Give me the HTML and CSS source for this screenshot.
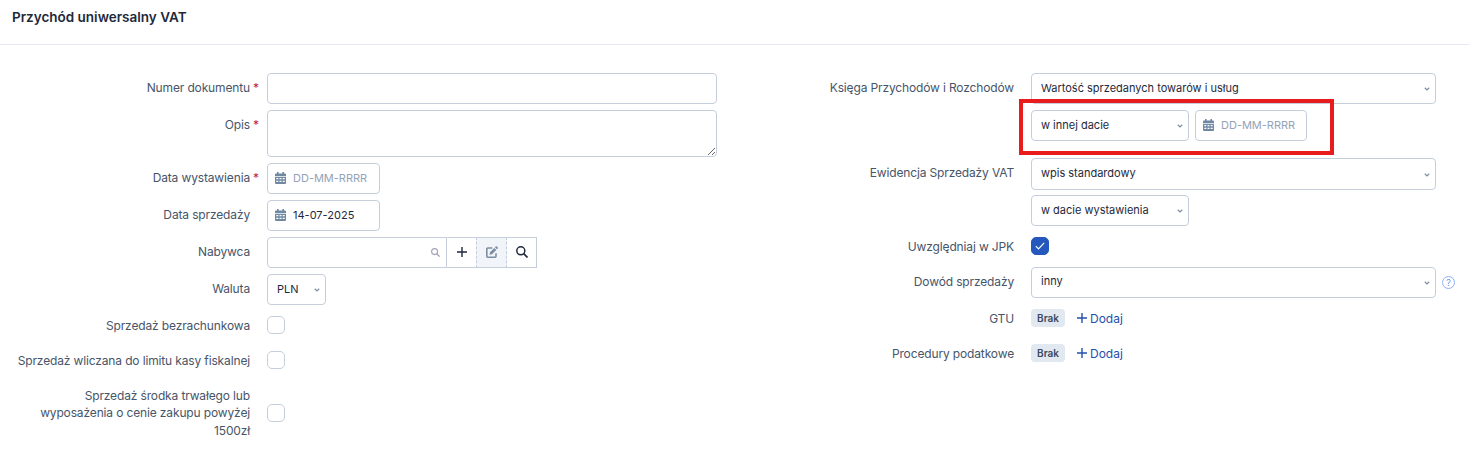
FILE: index.html
```html
<!DOCTYPE html>
<html lang="pl">
<head>
<meta charset="utf-8">
<title>Przychód uniwersalny VAT</title>
<link rel="stylesheet" href="styles.css">
</head>
<body>

<!-- Shared icons -->
<svg class="sprite">
  <symbol id="calendar" viewBox="0 0 11 12">
    <path fill="currentColor" d="M2 0h1.6v1.4h3.8V0H9v1.4h1a1 1 0 0 1 1 1V4H0V2.400a1 1 0 0 1 1-1h1zM0 4.700h11V11a1 1 0 0 1-1 1H1a1 1 0 0 1-1-1z"/>
    <path fill="#fff" d="M1.300 6h2v1.300h-2zM4.500 6h2v1.300h-2zM7.700 6h2v1.300h-2zM1.300 8.800h2v1.300h-2zM4.500 8.800h2v1.300h-2zM7.700 8.800h2v1.300h-2z"/>
  </symbol>
  <symbol id="chevron" viewBox="0 0 6 4">
    <path d="M.8.8 3 2.900 5.200.8" fill="none" stroke="currentColor" stroke-width="1.200"/>
  </symbol>
  <symbol id="search" viewBox="0 0 12 12">
    <circle cx="4.800" cy="4.800" r="4" fill="none" stroke="currentColor" stroke-width="1.500"/>
    <path d="M7.700 7.700 11.500 11.500" stroke="currentColor" stroke-width="1.700"/>
  </symbol>
  <symbol id="plus" viewBox="0 0 10 10">
    <path d="M5 0v10M0 5h10" stroke="currentColor" stroke-width="1.400"/>
  </symbol>
</svg>

<div class="header">
  <h1>Przychód uniwersalny VAT</h1>
</div>

<form class="form">
  <div class="col col-left">
    <div class="row">
      <label class="required">Numer dokumentu</label>
      <input type="text" class="control">
    </div>
    <div class="row">
      <label class="required">Opis</label>
      <textarea class="control"></textarea>
    </div>
    <div class="row">
      <label class="required">Data wystawienia</label>
      <div class="control date">
        <svg><use href="#calendar"/></svg>
        <input type="text" placeholder="DD-MM-RRRR">
      </div>
    </div>
    <div class="row">
      <label>Data sprzedaży</label>
      <div class="control date">
        <svg><use href="#calendar"/></svg>
        <input type="text" value="14-07-2025">
      </div>
    </div>
    <div class="row">
      <label>Nabywca</label>
      <div class="buyer">
        <div class="control lookup">
          <input type="text">
          <svg><use href="#search"/></svg>
        </div>
        <button type="button" class="btn"><svg class="icon-plus"><use href="#plus"/></svg></button>
        <button type="button" class="btn disabled">
          <svg class="icon-edit" viewBox="0 0 12 12">
            <path d="M6.300 2H1.800a1 1 0 0 0-1 1v7.200a1 1 0 0 0 1 1H9a1 1 0 0 0 1-1V7.300" fill="none" stroke="currentColor" stroke-width="1.600"/>
            <path d="M3.500 8.700 4 6.200 8.300 1.900l2 2L6 8.200zM8.900 1.300 9.700.5a.9.900 0 0 1 1.200 0l.8.8a.9.900 0 0 1 0 1.200l-.8.8z" fill="currentColor"/>
          </svg>
        </button>
        <button type="button" class="btn"><svg class="icon-search"><use href="#search"/></svg></button>
      </div>
    </div>
    <div class="row">
      <label>Waluta</label>
      <div class="control select currency"><span>PLN</span><svg><use href="#chevron"/></svg></div>
    </div>
    <div class="row check-row">
      <label>Sprzedaż bezrachunkowa</label>
      <span class="checkbox"></span>
    </div>
    <div class="row check-row">
      <label>Sprzedaż wliczana do limitu kasy fiskalnej</label>
      <span class="checkbox"></span>
    </div>
    <div class="row check-row">
      <label>Sprzedaż środka trwałego lub wyposażenia o cenie zakupu powyżej 1500zł</label>
      <span class="checkbox"></span>
    </div>
  </div>

  <div class="col col-right">
    <div class="row">
      <label>Księga Przychodów i Rozchodów</label>
      <div class="stack">
        <div class="control select"><span>Wartość sprzedanych towarów i usług</span><svg><use href="#chevron"/></svg></div>
        <div class="inline">
          <div class="control select short"><span>w innej dacie</span><svg><use href="#chevron"/></svg></div>
          <div class="control date">
            <svg><use href="#calendar"/></svg>
            <input type="text" placeholder="DD-MM-RRRR">
          </div>
          <div class="highlight"></div>
        </div>
      </div>
    </div>
    <div class="row vat-row">
      <label>Ewidencja Sprzedaży VAT</label>
      <div class="stack">
        <div class="control select"><span>wpis standardowy</span><svg><use href="#chevron"/></svg></div>
        <div class="control select short"><span>w dacie wystawienia</span><svg><use href="#chevron"/></svg></div>
      </div>
    </div>
    <div class="row check-row">
      <label>Uwzględniaj w JPK</label>
      <span class="checkbox checked">
        <svg viewBox="0 0 10 8"><path d="M.8 4.200 3.500 7 9.200.9" fill="none" stroke="#fff" stroke-width="1.200"/></svg>
      </span>
    </div>
    <div class="row">
      <label>Dowód sprzedaży</label>
      <div class="inline">
        <div class="control select"><span>inny</span><svg><use href="#chevron"/></svg></div>
        <span class="help">?</span>
      </div>
    </div>
    <div class="row check-row">
      <label>GTU</label>
      <div class="tags">
        <span class="badge">Brak</span>
        <a class="add"><svg class="icon-plus"><use href="#plus"/></svg>Dodaj</a>
      </div>
    </div>
    <div class="row check-row">
      <label>Procedury podatkowe</label>
      <div class="tags">
        <span class="badge">Brak</span>
        <a class="add"><svg class="icon-plus"><use href="#plus"/></svg>Dodaj</a>
      </div>
    </div>
  </div>
</form>

</body>
</html>
```
FILE: styles.css
```css
* {
  box-sizing: border-box;
}

body {
  margin: 0;
  background: #fff;
  color: #1e293b;
  font-family: Inter, "Liberation Sans", sans-serif;
  font-size: 11px;
}

.sprite {
  display: none;
}

svg {
  display: block;
  flex: none;
}

.header {
  height: 45px;
  padding: 9px 13px 9px 12px;
  border-bottom: 1px solid #e7e9f2;
}

.header h1 {
  margin: 0;
  font-size: 13.5px;
  line-height: 17px;
  font-weight: 600;
}

/* Two columns of label + field rows */
.form {
  display: grid;
  grid-template-columns: 764px 1fr;
  padding-top: 28px;
}

.col {
  display: flex;
  flex-direction: column;
  gap: 6px;
}

.row {
  display: grid;
  grid-template-columns: 250px max-content;
  column-gap: 17px;
  align-items: start;
}

.check-row {
  align-items: center;
}

label {
  position: relative;
  padding: 5.7px 0 5.7px 15px;
  color: #475569;
  font-size: 12px;
  line-height: 17.6px;
  letter-spacing: -0.14px;
  text-align: right;
}

.required::after {
  content: "*";
  position: absolute;
  left: 100%;
  margin-left: 3px;
  color: #c81e1e;
}

.control {
  display: flex;
  align-items: center;
  width: 450px;
  height: 31px;
  border: 1px solid #c5cedb;
  border-radius: 4px;
  background: #fff;
  outline: none;
}

textarea.control {
  display: block;
  height: 47px;
  margin: 0;
}

.control input {
  width: 100%;
  min-width: 0;
  padding: 0;
  border: 0;
  outline: none;
  background: none;
  color: inherit;
  font: inherit;
}

.control input::placeholder {
  color: #94a3b8;
}

.date {
  width: 113px;
  padding: 0 4px 2px 7px;
  gap: 7px;
}

.date svg {
  width: 11px;
  height: 12px;
  margin-top: 1px;
  color: #7188a3;
}

.select {
  justify-content: space-between;
  width: 405px;
  padding: 0 5px 2px 9px;
}

.select svg {
  width: 6px;
  height: 4px;
  margin-top: 3px;
  color: #7c8da3;
}

.short {
  width: 158px;
}

.currency {
  width: 59px;
}

/* Buyer lookup with its buttons */
.buyer {
  display: flex;
}

.lookup {
  width: 180px;
  padding: 0 6px 0 9px;
  border-radius: 4px 0 0 4px;
}

.lookup svg {
  width: 9px;
  height: 9px;
  color: #a3a3b8;
}

.btn {
  display: flex;
  align-items: center;
  justify-content: center;
  width: 30px;
  height: 31px;
  padding: 0 0 1px;
  border: 1px solid #c5cedb;
  border-left: 0;
  background: #fff;
  color: #1e293b;
}

.btn.disabled {
  border-left: 1px dashed #c5cedb;
  border-right: 1px dashed #c5cedb;
  background: #f1f5f9;
  color: #7c8da3;
  margin-left: -1px;
  width: 31px;
}

.icon-plus {
  width: 10px;
  height: 10px;
}

.icon-edit,
.icon-search {
  width: 12px;
  height: 12px;
}

.checkbox {
  display: flex;
  align-items: center;
  justify-content: center;
  width: 18px;
  height: 18px;
  border: 1px solid #c5cedb;
  border-radius: 5px;
}

.checked {
  border-color: #2458bd;
  background: #2458bd;
}

.checked svg {
  width: 10px;
  height: 8px;
}

.stack {
  display: flex;
  flex-direction: column;
  gap: 6px;
}

.inline {
  position: relative;
  display: flex;
  align-items: center;
  gap: 6px;
}

.inline .date {
  width: 112px;
}

.vat-row {
  margin-top: 11px;
}

.vat-row .stack {
  gap: 5px;
}

.vat-row .select:first-child {
  height: 32px;
}

/* Red frame over the date fields */
.highlight {
  position: absolute;
  top: -11px;
  left: -12px;
  width: 315px;
  height: 56px;
  border: 4px solid #e81c1c;
}

.help {
  width: 13px;
  height: 13px;
  border: 1px solid #8fb0f5;
  border-radius: 50%;
  color: #6f97f0;
  font-size: 9px;
  line-height: 11px;
  text-align: center;
}

.tags {
  display: flex;
  align-items: center;
  gap: 12px;
}

.badge {
  width: 34px;
  height: 18px;
  border-radius: 4px;
  background: #e2e8f0;
  color: #3b4a63;
  font-size: 10px;
  line-height: 18px;
  font-weight: 600;
  text-align: center;
}

.add {
  display: flex;
  align-items: center;
  gap: 3px;
  color: #2450ad;
  font-size: 12px;
}
```
